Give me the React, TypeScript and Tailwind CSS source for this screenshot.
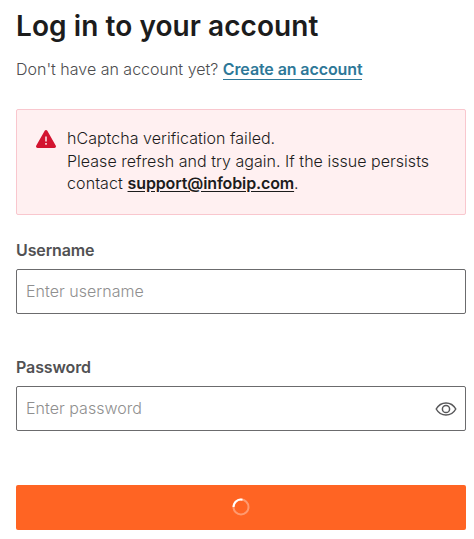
import { useState } from 'react';

interface FieldProps {
  id: string;
  label: string;
  type: string;
  placeholder: string;
  children?: React.ReactNode;
}

function Field({ id, label, type, placeholder, children }: FieldProps) {
  return (
    <div>
      <label htmlFor={id} className="block h-6 text-[16px] leading-6 font-semibold tracking-[-0.12px] text-[#515153]">
        {label}
      </label>
      <div className="mt-[7px] flex h-[45px] items-center rounded-[2px] border border-[#6b6b6d] bg-white pl-[9px] pr-2">
        <input
          id={id}
          type={type}
          placeholder={placeholder}
          className="mb-0.5 min-w-0 flex-1 bg-transparent text-[16px] leading-6 font-light tracking-[0.03px] text-[#1c1c1c] outline-none placeholder:text-[#8f8f8f]"
        />
        {children}
      </div>
    </div>
  );
}

function WarningIcon() {
  return (
    <svg width="20" height="18" viewBox="0 0 20 18" className="shrink-0">
      <path
        d="M8.7.8a1.5 1.5 0 0 1 2.6 0l8.4 14.6A1.7 1.7 0 0 1 18.2 18H1.8A1.7 1.7 0 0 1 .3 15.4Z"
        fill="#d31430"
      />
      <path d="M10 6.5v5" stroke="#fff" strokeWidth="1.4" />
      <path d="M10 13v1.8" stroke="#fff" strokeWidth="1.4" />
    </svg>
  );
}

function EyeIcon() {
  return (
    <svg width="22" height="16" viewBox="0 0 22 16" fill="none" stroke="#58585a" strokeWidth="1.5">
      <path
        d="M1.2 8C3.4 4.1 7 1.9 11 1.9S18.6 4.1 20.8 8C18.6 11.9 15 14.1 11 14.1S3.4 11.9 1.2 8Z"
        strokeLinejoin="round"
      />
      <circle cx="11" cy="8" r="3.6" />
    </svg>
  );
}

function Spinner() {
  return (
    <svg width="18" height="18" viewBox="0 0 18 18" fill="none" strokeWidth="2" className="mb-0.5">
      <circle cx="9" cy="9" r="7.5" stroke="#fff" strokeOpacity="0.35" />
      <path d="M1.5 9A7.5 7.5 0 0 1 10.5 1.65" stroke="#fff" />
    </svg>
  );
}

export default function App() {
  const [showPassword, setShowPassword] = useState(false);

  return (
    <main className="h-[539px] w-[474px] overflow-hidden bg-white pl-4 pr-2 pt-1.5 font-['Inter',sans-serif]">
      <h1 className="h-10 text-[28px] leading-10 font-semibold tracking-[0.07px] text-[#1c1c1c]">
        Log in to your account
      </h1>
      <p className="mt-[11px] h-6 text-[16px] leading-6 font-light text-[#4d4d4f]">
        Don't have an account yet?{' '}
        <a href="#" className="border-b border-[#2e7898] font-semibold tracking-[-0.1px] text-[#2e7898]">
          Create an account
        </a>
      </p>

      <div className="mt-7 flex h-[106px] rounded-[2px] border border-[#f9c7ce] bg-[#fff0f1] pl-[19px] pt-[17px]">
        <div className="mt-[3px] mr-[11px]">
          <WarningIcon />
        </div>
        <p className="text-[16px] leading-[22.5px] font-light tracking-[0.03px] text-[#1c1c1c]">
          hCaptcha verification failed.
          <br />
          Please refresh and try again. If the issue persists
          <br />
          <span className="tracking-[0.1px]">contact </span>
          <a href="#" className="font-semibold tracking-[-0.12px] underline underline-offset-2">
            support@infobip.com
          </a>
          .
        </p>
      </div>

      <form className="mt-[23px]">
        <Field id="username" label="Username" type="text" placeholder="Enter username" />
        <div className="mt-[41px]">
          <Field
            id="password"
            label="Password"
            type={showPassword ? 'text' : 'password'}
            placeholder="Enter password"
          >
            <button type="button" aria-label="Show password" onClick={() => setShowPassword(!showPassword)}>
              <EyeIcon />
            </button>
          </Field>
        </div>
        <button
          type="button"
          aria-label="Log in"
          className="mt-[54px] flex h-[45px] w-full items-center justify-center rounded-[2px] bg-[#ff6423]"
        >
          <Spinner />
        </button>
      </form>
    </main>
  );
}
